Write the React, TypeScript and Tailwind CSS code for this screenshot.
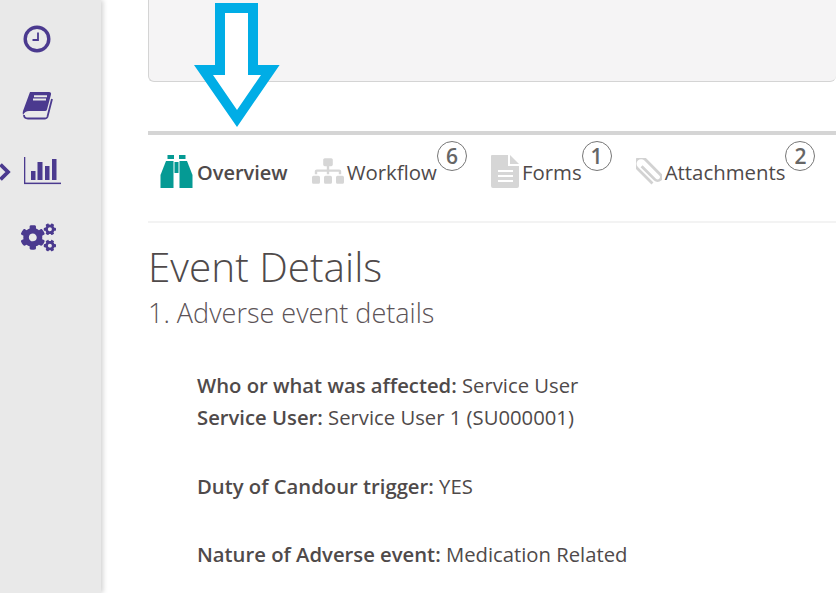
import { FaSitemap, FaCogs } from "react-icons/fa";

function Clock() {
  return (
    <svg width="28" height="28" viewBox="0 0 28 28" fill="none">
      <circle cx="14" cy="14" r="11.8" stroke="#4b3a8f" strokeWidth="3.4" />
      <path d="M15 7.5V15H9.5" stroke="#4b3a8f" strokeWidth="1.8" />
    </svg>
  );
}

function Book() {
  return (
    <svg width="31" height="29" viewBox="0 0 31 29" fill="none">
      <path d="M8 1H27Q29.5 1 29 3.5L25 18.5Q24.6 20 23 20H7Q3 20 1 24Q0.4 22 1 20Z" fill="#4b3a8f" />
      <path d="M2 24Q2 27.5 6 27.5H23Q24.8 27.5 25.4 26L30 8" stroke="#4b3a8f" strokeWidth="1.8" />
      <path d="M12 5.2H25M11 8.6H24" stroke="#e9e9e9" strokeWidth="2" />
    </svg>
  );
}

function Chart() {
  return (
    <svg width="37" height="28" viewBox="0 0 37 28" fill="#4b3a8f">
      <rect x="0" y="0" width="1.3" height="27" />
      <rect x="0" y="25.6" width="37" height="1.5" />
      <rect x="7" y="14" width="4.5" height="9" />
      <rect x="13.5" y="5" width="5" height="18" />
      <rect x="21" y="9" width="4.5" height="14" />
      <rect x="28" y="2" width="4.5" height="21" />
    </svg>
  );
}

function Chevron() {
  return (
    <svg width="14" height="20" viewBox="0 0 14 20" fill="none">
      <path d="M2.5 2.5L10 10L2.5 17.5" stroke="#4b3a8f" strokeWidth="3.8" />
    </svg>
  );
}

function Binoculars() {
  return (
    <svg width="33" height="33" viewBox="0 0 33 33" fill="#059a94">
      <rect x="7.5" y="0" width="6.5" height="4" />
      <rect x="19" y="0" width="6.5" height="4" />
      <path d="M6 6H13.5V33H0.5V20Z" />
      <path d="M19.5 6H27L32.5 20V33H19.5Z" />
      <rect x="14.5" y="7" width="4" height="11" />
    </svg>
  );
}

function FormIcon() {
  return (
    <svg width="28" height="33" viewBox="0 0 28 33">
      <path d="M1 0H17V11H28V31a2 2 0 0 1-2 2H2a2 2 0 0 1-2-2V1a1 1 0 0 1 1-1Z" fill="#d6d6d6" />
      <path d="M19 0L28 9H19Z" fill="#d6d6d6" />
      <path d="M7 16H22M7 21H22M7 26H22" stroke="#fff" strokeWidth="2" />
    </svg>
  );
}

function Clip() {
  return (
    <svg width="26" height="27" viewBox="0 0 26 27" fill="none">
      <g transform="translate(13 13.5) rotate(-45)">
        <path
          d="M-1.5 -9V10a3.7 3.7 0 0 0 7.4 0V-11a6 6 0 0 0 -12 0V11"
          stroke="#d2d2d2"
          strokeWidth="2.8"
        />
      </g>
    </svg>
  );
}

function Badge({ n }: { n: number }) {
  return (
    <span className="mt-[-3px] flex h-[30px] w-[30px] shrink-0 items-center justify-center self-start rounded-full border border-[#777] text-[21px] font-semibold leading-none text-[#666]">
      {n}
    </span>
  );
}

function Field({ label, value }: { label: string; value: string }) {
  return (
    <div>
      <b className="font-semibold">{label}</b> {value}
    </div>
  );
}

export default function App() {
  return (
    <div className="relative flex h-[593px] w-[836px] overflow-hidden bg-white font-['Open_Sans',sans-serif] text-[#4f4a4a]">
      <aside className="relative flex w-[101px] shrink-0 flex-col items-center bg-[#e9e9e9] pr-[27px] pt-[6px] shadow-[2px_0_5px_rgba(0,0,0,0.18)]">
        <div className="flex h-[66px] items-center justify-center">
          <Clock />
        </div>
        <div className="flex h-[66px] items-center justify-center">
          <Book />
        </div>
        <div className="relative flex h-[66px] items-center justify-center">
          <span className="absolute left-[-16px] top-[24px]">
            <Chevron />
          </span>
          <span className="ml-[10px]">
            <Chart />
          </span>
        </div>
        <div className="flex h-[66px] items-center justify-center">
          <FaCogs className="ml-[2px] h-[35px] w-[35px] text-[#4b3a8f]" />
        </div>
      </aside>

      <main className="min-w-0 flex-1 pl-[47px]">
        <div className="h-[82px] rounded-b-[6px] border border-t-0 border-r-0 border-[#d4d4d4] bg-[#f5f4f5]" />
        <div className="mt-[49px] h-[4px] bg-[#d5d5d5]" />

        <nav className="flex h-[88px] border-b-2 border-[#f3f3f3] pl-[12px] pt-[9px] text-[20.4px] leading-none">
          <div className="flex h-[44px] items-end">
            <Binoculars />
            <span className="mb-[5px] ml-[4px] text-[20px] font-semibold">Overview</span>
          </div>
          <div className="ml-[24px] flex h-[44px] items-end">
            <FaSitemap className="mb-[3px] h-[28px] w-[32px] text-[#d6d6d6]" />
            <span className="mb-[6px] ml-[3px]">Workflow</span>
            <Badge n={6} />
          </div>
          <div className="ml-[24px] flex h-[44px] items-end">
            <FormIcon />
            <span className="mb-[6px] ml-[3px]">Forms</span>
            <Badge n={1} />
          </div>
          <div className="ml-[24px] flex h-[44px] items-end">
            <span className="mb-[3px]">
              <Clip />
            </span>
            <span className="mb-[6px] ml-[3px]">Attachments</span>
            <Badge n={2} />
          </div>
        </nav>

        <h1 className="mt-[16px] text-[40.5px] font-light leading-[56px]">Event Details</h1>
        <h2 className="text-[27px] font-light leading-[36px] text-[#5c5357]">1. Adverse event details</h2>

        <div className="mt-[38px] pl-[49px] text-[20.25px] leading-[32px]">
          <Field label="Who or what was affected:" value="Service User" />
          <Field label="Service User:" value="Service User 1 (SU000001)" />
          <div className="mt-[37px]">
            <Field label="Duty of Candour trigger:" value="YES" />
          </div>
          <div className="mt-[36px]">
            <Field label="Nature of Adverse event:" value="Medication Related" />
          </div>
        </div>
      </main>

      <svg className="absolute left-[190px] top-0" width="95" height="132" viewBox="190 0 95 132">
        <path d="M215 3H258V65H279.6L237 127L194 65H215Z" fill="#00ade6" />
        <path d="M225 13H248V75H261L237 110L213 75H225Z" fill="#fff" />
      </svg>
    </div>
  );
}
